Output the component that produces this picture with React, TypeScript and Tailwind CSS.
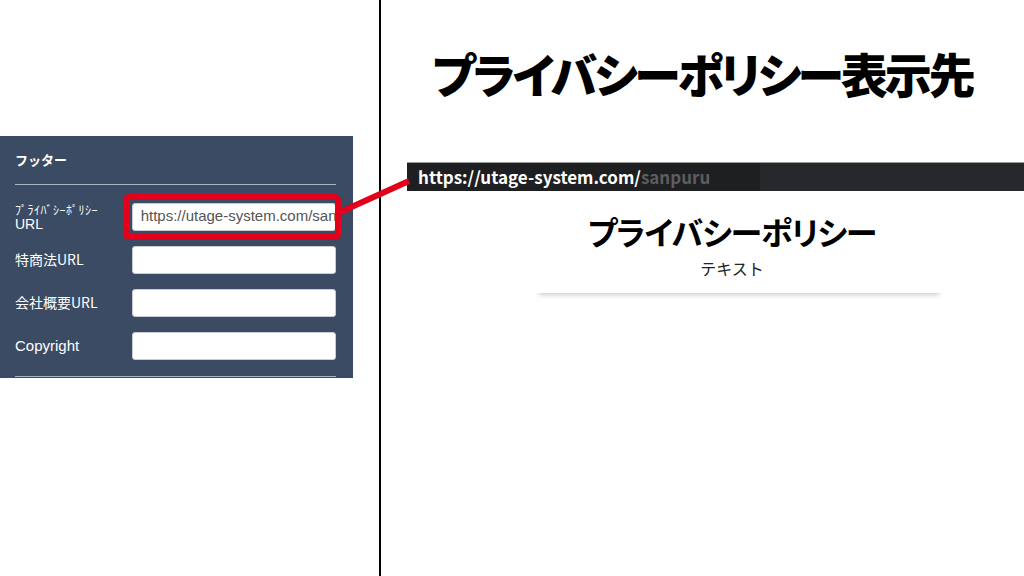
import React from 'react';

const jp = "font-['Noto_Sans_CJK_JP','Noto_Sans',sans-serif]";

function Field({ label, value }: { label: React.ReactNode; value?: string }) {
  return (
    <div className="flex items-center h-[43px]">
      <div className="w-[117px] text-[14px] leading-[15px] text-white">{label}</div>
      <div className="w-[205px] h-[28px] bg-white rounded-[3px] border border-[#c9ccd2] flex items-center pl-[8px] overflow-hidden">
        {value && (
          <span className="text-[15px] text-[#555] whitespace-nowrap font-['Liberation_Sans',sans-serif]">{value}</span>
        )}
      </div>
    </div>
  );
}

export default function App() {
  return (
    <div className={`relative w-[1024px] h-[576px] bg-white flex overflow-hidden ${jp}`}>
      {/* left: editor panel */}
      <div className="w-[379px] shrink-0">
        <div className="mt-[136px] w-[353px] h-[242px] bg-[#3c4b64] pl-[15px] pr-[17px] pt-[15px]">
          <div className="text-[13px] font-bold text-white leading-[18px]">フッター</div>
          <div className="mt-[15px] h-px bg-[#a9b4c4]" />
          <div className="mt-[10px]">
            <Field
              label={
                <>
                  <div className="text-[12px] tracking-[0.5px]">ﾌﾟﾗｲﾊﾞｼｰﾎﾟﾘｼｰ</div>
                  <div className="font-['Liberation_Sans',sans-serif]">URL</div>
                </>
              }
              value="https://utage-system.com/sanpuru"
            />
            <Field label="特商法URL" />
            <Field label="会社概要URL" />
            <Field label={<span className="font-['Liberation_Sans',sans-serif] text-[15px]">Copyright</span>} />
          </div>
          <div className="mt-[9px] h-px bg-[#a9b4c4]" />
        </div>
      </div>

      {/* divider */}
      <div className="w-[2px] h-full bg-black shrink-0" />

      {/* right: preview */}
      <div className="flex-1 flex flex-col">
        <h1 className="mt-[44px] text-center text-[47px] leading-[58px] font-black text-black tracking-[-3px] [font-feature-settings:'palt']">
          プライバシーポリシー表示先
        </h1>
        <div className="mt-[60px] ml-[26px] h-[29px] flex border-t border-[#9a9a9a] bg-[#27282b]">
          <div className="w-[353px] bg-[#1e1f21] flex items-center pl-[11px] text-[17px] font-bold">
            <span className="text-white">https://utage-system.com/</span>
            <span className="text-[#5c5d60]">sanpuru</span>
          </div>
        </div>
        <div className="ml-[154px] w-[408px] bg-white shadow-[0_6px_5px_-4px_rgba(0,0,0,0.2)] pt-[20px] pb-[14px] pr-[14px] text-center">
          <div className="text-[32px] leading-[40px] font-bold text-black tracking-[-1px] [font-feature-settings:'palt']">プライバシーポリシー</div>
          <div className="mt-[6px] text-[16px] leading-[22px] text-[#222]">テキスト</div>
        </div>
      </div>

      {/* highlight box and arrow */}
      <div className="absolute left-[123px] top-[194px] w-[218px] h-[46px] border-[6px] border-[#e3001b] rounded-[6px]" />
      <svg className="absolute left-0 top-0" width="1024" height="576">
        <line x1="336" y1="214" x2="409" y2="181" stroke="#e3001b" strokeWidth="6" />
      </svg>
    </div>
  );
}
